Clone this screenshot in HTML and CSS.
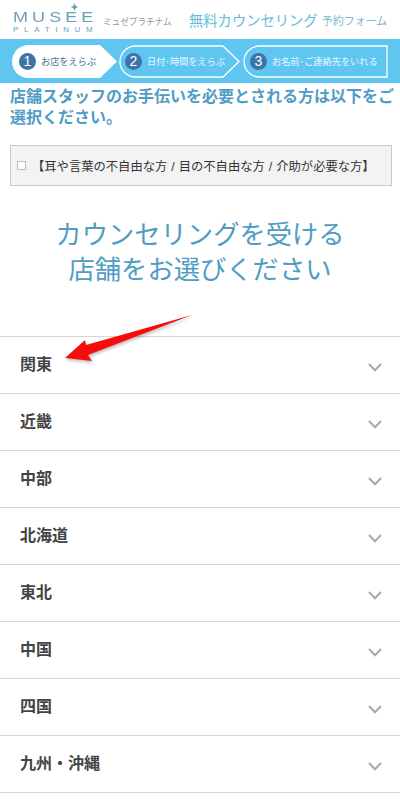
FILE: index.html
```html
<!DOCTYPE html>
<html lang="ja">
<head>
<meta charset="utf-8">
<title>無料カウンセリング 予約フォーム</title>
<link rel="stylesheet" href="styles.css">
</head>
<body>
<header class="top">
  <div class="logo">
    <svg class="logo-star" width="9" height="8" viewBox="0 0 10 10"><path d="M5 0 L6.4 3.6 L10 5 L6.4 6.4 L5 10 L3.6 6.4 L0 5 L3.6 3.6 Z" fill="#5f9bb5"/></svg>
    <span class="logo-main">MUSEE</span>
    <span class="logo-sub">PLATINUM</span>
  </div>
  <span class="logo-kana">ミュゼプラチナム</span>
  <span class="top-title">無料カウンセリング</span>
  <span class="top-sub">予約フォーム</span>
</header>
<nav class="steps">
  <div class="step step-one">
    <svg class="step-shape" width="106" height="33" viewBox="0 0 106 33"><path d="M16.5 0 H88 L105 16.5 L88 33 H16.5 A16.5 16.5 0 0 1 16.5 0 Z" fill="#fff"/></svg>
    <span class="num">1</span><span class="step-text">お店をえらぶ</span>
  </div>
  <div class="step step-two">
    <svg class="step-shape" width="123" height="33" viewBox="0 0 123 33"><path d="M16.5 1 H104 L120 16.5 L104 32 H16.5 A15.5 15.5 0 0 1 16.5 1 Z" fill="none" stroke="#fff" stroke-width="1.3"/></svg>
    <span class="num">2</span><span class="step-text">日付･時間をえらぶ</span>
  </div>
  <div class="step step-three">
    <svg class="step-shape" width="145" height="33" viewBox="0 0 145 33"><path d="M16.5 1 H144 V32 H16.5 A15.5 15.5 0 0 1 16.5 1 Z" fill="none" stroke="#fff" stroke-width="1.3"/></svg>
    <span class="num">3</span><span class="step-text">お名前･ご連絡先をいれる</span>
  </div>
</nav>
<main>
  <h2 class="notice">店舗スタッフのお手伝いを必要とされる方は以下をご選択ください。</h2>
  <label class="assist">
    <span class="check"></span>
    <span class="assist-text">【耳や言葉の不自由な方 / 目の不自由な方 / 介助が必要な方】</span>
  </label>
  <h1 class="headline">カウンセリングを受ける<br>店舗をお選びください</h1>
  <ul class="areas">
    <li class="area"><span>関東</span><svg class="chev" width="14" height="9" viewBox="0 0 14 9"><path d="M1 1 L7 7.2 L13 1" fill="none" stroke="#a9a9a9" stroke-width="2"/></svg></li>
    <li class="area"><span>近畿</span><svg class="chev" width="14" height="9" viewBox="0 0 14 9"><path d="M1 1 L7 7.2 L13 1" fill="none" stroke="#a9a9a9" stroke-width="2"/></svg></li>
    <li class="area"><span>中部</span><svg class="chev" width="14" height="9" viewBox="0 0 14 9"><path d="M1 1 L7 7.2 L13 1" fill="none" stroke="#a9a9a9" stroke-width="2"/></svg></li>
    <li class="area"><span>北海道</span><svg class="chev" width="14" height="9" viewBox="0 0 14 9"><path d="M1 1 L7 7.2 L13 1" fill="none" stroke="#a9a9a9" stroke-width="2"/></svg></li>
    <li class="area"><span>東北</span><svg class="chev" width="14" height="9" viewBox="0 0 14 9"><path d="M1 1 L7 7.2 L13 1" fill="none" stroke="#a9a9a9" stroke-width="2"/></svg></li>
    <li class="area"><span>中国</span><svg class="chev" width="14" height="9" viewBox="0 0 14 9"><path d="M1 1 L7 7.2 L13 1" fill="none" stroke="#a9a9a9" stroke-width="2"/></svg></li>
    <li class="area"><span>四国</span><svg class="chev" width="14" height="9" viewBox="0 0 14 9"><path d="M1 1 L7 7.2 L13 1" fill="none" stroke="#a9a9a9" stroke-width="2"/></svg></li>
    <li class="area"><span>九州・沖縄</span><svg class="chev" width="14" height="9" viewBox="0 0 14 9"><path d="M1 1 L7 7.2 L13 1" fill="none" stroke="#a9a9a9" stroke-width="2"/></svg></li>
  </ul>
  <svg class="arrow" width="140" height="56" viewBox="0 0 140 56">
    <defs><filter id="sh" x="-10%" y="-20%" width="120%" height="150%"><feDropShadow dx="1" dy="2" stdDeviation="1.5" flood-color="#000" flood-opacity="0.25"/></filter></defs>
    <path d="M3 44 L23 26 L24 31 L130 1 L26 41 L30 47 Z" fill="#f50d0d" filter="url(#sh)"/>
  </svg>
</main>
</body>
</html>
```
FILE: styles.css
```css
* { box-sizing: border-box; }
html, body { margin: 0; padding: 0; }
body {
  width: 400px;
  height: 800px;
  overflow: hidden;
  background: #fff;
  color: #333;
  font-family: "Liberation Sans", "Noto Sans CJK JP", sans-serif;
}
.top {
  height: 39px;
  display: flex;
  align-items: flex-end;
  padding: 0 0 6px 13px;
}
.logo {
  position: relative;
  width: 82px;
  margin-bottom: -2px;
  display: flex;
  flex-direction: column;
  color: #6f9fb6;
  line-height: 1;
}
.logo-star { position: absolute; left: 57px; top: -8px; }
.logo-main {
  font-size: 15px;
  letter-spacing: 3.4px;
  line-height: 12px;
  white-space: nowrap;
  transform: scaleX(1.2);
  transform-origin: left center;
}
.logo-sub {
  font-size: 8px;
  letter-spacing: 5.7px;
  line-height: 10px;
  margin-top: 2px;
  white-space: nowrap;
}
.logo-kana {
  font-size: 8.6px;
  color: #8f9a9f;
  margin-left: 8px;
  line-height: 22px;
  width: 86px;
  white-space: nowrap;
}
.top-title {
  font-size: 14.3px;
  color: #62bddd;
  line-height: 24px;
  white-space: nowrap;
}
.top-sub {
  font-size: 11px;
  color: #7ab9d4;
  margin-left: 4px;
  line-height: 24px;
  white-space: nowrap;
}
.steps {
  height: 44px;
  background: #5fc6f1;
  display: flex;
  align-items: center;
  padding-left: 12px;
  gap: 1px;
}
.step {
  position: relative;
  height: 33px;
  display: flex;
  align-items: center;
  padding-left: 7px;
  gap: 5px;
  color: #e8f7fd;
  font-size: 9.2px;
  white-space: nowrap;
}
.step-shape { position: absolute; left: 0; top: 0; }
.step-one { width: 106px; color: #4d6f88; }
.step-two { width: 123px; padding-left: 6px; }
.step-three { width: 145px; }
.num {
  position: relative;
  width: 17px;
  height: 17px;
  flex: none;
  border-radius: 50%;
  background: #3d74a8;
  color: #fff;
  font-size: 14px;
  line-height: 17px;
  text-align: center;
}
.step-text { position: relative; }
main { position: relative; }
.notice {
  margin: 3px 0 0 10px;
  font-size: 16px;
  line-height: 21px;
  font-weight: 700;
  color: #4f9cc4;
}
.assist {
  margin: 17px 8px 0 10px;
  height: 41px;
  background: #f3f3f3;
  border: 1px solid #c9c9c9;
  display: flex;
  align-items: center;
  padding-left: 6px;
  gap: 6px;
  font-size: 12.3px;
  word-spacing: 0.6px;
  color: #333;
}
.check {
  width: 9px;
  height: 9px;
  flex: none;
  border: 1px solid #b5bcc2;
  background: #fff;
}
.assist-text { white-space: nowrap; }
.headline {
  margin: 32px 0 48px;
  text-align: center;
  font-size: 26.3px;
  line-height: 35px;
  font-weight: 400;
  color: #4f9cc4;
}
.areas {
  list-style: none;
  margin: 0;
  padding: 0;
  border-top: 1px solid #d6d6d6;
}
.area {
  height: 57px;
  border-bottom: 1px solid #d6d6d6;
  display: flex;
  align-items: center;
  justify-content: space-between;
  padding: 0 18px 5px 20px;
  font-size: 16px;
  font-weight: 700;
  color: #444;
}
.chev { margin-top: 10px; }
.arrow { position: absolute; left: 62px; top: 228px; }
```
